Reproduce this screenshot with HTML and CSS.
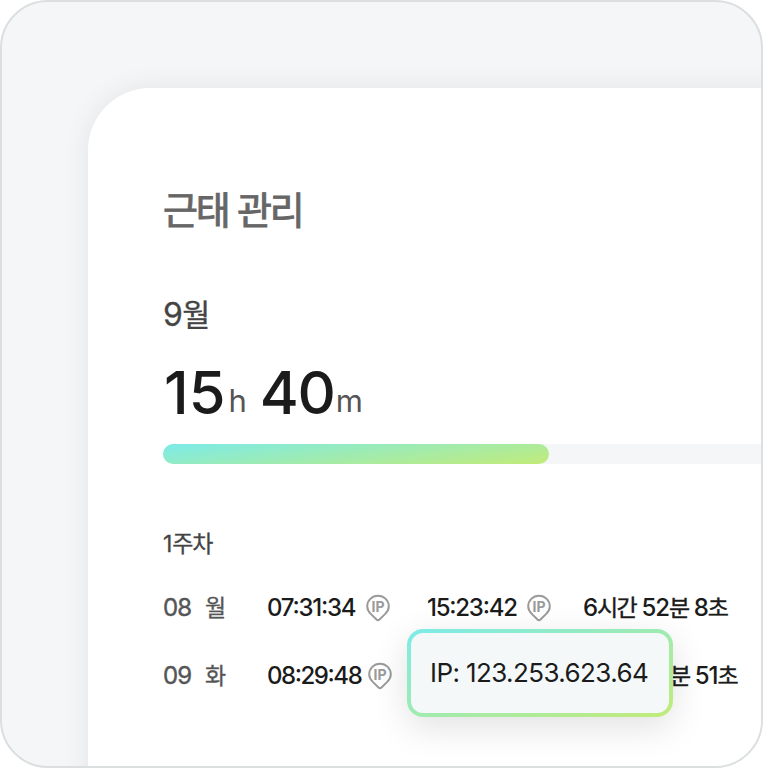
FILE: index.html
```html
<!DOCTYPE html>
<html lang="ko">
<head>
<meta charset="utf-8">
<title>근태 관리</title>
<link rel="stylesheet" href="styles.css">
</head>
<body>
<main class="frame">
  <section class="card">
    <h1 class="title">근태 관리</h1>
    <p class="month">9<span class="month-ko">월</span></p>
    <p class="total"><span class="num">15</span><span class="unit unit-h">h</span><span class="num num-m">40</span><span class="unit unit-m">m</span></p>
    <div class="track"><div class="bar"></div></div>
    <h2 class="week">1<span class="week-ko">주차</span></h2>
    <div class="row">
      <span class="date">08</span><span class="day">월</span>
      <span class="time"><b>07:31:34</b><svg class="pin" viewBox="0 0 26 28"><path d="M13 1.8C6.9 1.8 2.2 6.5 2.2 12.3c0 3.3 1.5 5.6 3.8 7.8l5.5 5.4c.9.8 2.1.8 3 0l5.5-5.4c2.3-2.2 3.8-4.5 3.8-7.8C23.8 6.5 19.1 1.8 13 1.8z"/><text x="13.2" y="17.6" text-anchor="middle">IP</text></svg></span>
      <span class="time"><b>15:23:42</b><svg class="pin" viewBox="0 0 26 28"><path d="M13 1.8C6.9 1.8 2.2 6.5 2.2 12.3c0 3.3 1.5 5.6 3.8 7.8l5.5 5.4c.9.8 2.1.8 3 0l5.5-5.4c2.3-2.2 3.8-4.5 3.8-7.8C23.8 6.5 19.1 1.8 13 1.8z"/><text x="13.2" y="17.6" text-anchor="middle">IP</text></svg></span>
      <span class="dur">6<i>시간</i> 52<i>분</i> 8<i>초</i></span>
    </div>
    <div class="row">
      <span class="date">09</span><span class="day">화</span>
      <span class="time"><b class="time-tight">08:29:48</b><svg class="pin pin-tight" viewBox="0 0 26 28"><path d="M13 1.8C6.9 1.8 2.2 6.5 2.2 12.3c0 3.3 1.5 5.6 3.8 7.8l5.5 5.4c.9.8 2.1.8 3 0l5.5-5.4c2.3-2.2 3.8-4.5 3.8-7.8C23.8 6.5 19.1 1.8 13 1.8z"/><text x="13.2" y="17.6" text-anchor="middle">IP</text></svg></span>
      <span class="time"></span>
      <span class="dur dur-end"><i>분</i> 51<i>초</i></span>
    </div>
  </section>
  <div class="tooltip">IP: 123.253.623.64</div>
</main>
</body>
</html>
```
FILE: styles.css
```css
* { box-sizing: border-box; }
body { margin: 0; background: #fff; font-family: Inter, "Noto Sans CJK KR", sans-serif; color: #1b1b1b; }
h1, h2, p { margin: 0; font-weight: 400; }
.frame {
  position: relative;
  width: 763px;
  height: 768px;
  padding: 86px 0 0 85.5px;
  border: 2px solid #dcdfdf;
  border-radius: 48px;
  background: #f4f6f8;
  overflow: hidden;
}
.card {
  width: 740px;
  height: 760px;
  padding: 94px 0 0 75.5px;
  border-radius: 62px 0 0 0;
  background: #fff;
  box-shadow: 0 0 28px rgba(0, 0, 0, .08);
}
.title { height: 56px; line-height: 56px; font-size: 38px; letter-spacing: -2.2px; color: #666; -webkit-text-stroke: .9px #666; }
.month { height: 40px; margin-top: 57px; line-height: 40px; font-size: 32px; color: #444; -webkit-text-stroke: .3px #444; }
.month-ko { margin-left: -.5px; font-size: 30.5px; }
.total { display: flex; align-items: baseline; height: 72px; margin-top: 21px; padding-left: 1px; line-height: 72px; }
.num { font-size: 59.5px; font-weight: 500; letter-spacing: 0; }
.num-m { margin-left: 13px; letter-spacing: -1.5px; }
.unit { position: relative; top: -2px; font-size: 31px; color: #555; }
.unit-h { margin-left: 3px; }
.unit-m { margin-left: 1.5px; }
.track { height: 20px; margin-top: 16px; background: #f4f6f8; border-radius: 10px 0 0 10px; }
.bar { width: 386px; height: 20px; border-radius: 10px; background: linear-gradient(173deg, #7cebe9, #c2eb79); }
.week { height: 32px; margin-top: 64px; line-height: 32px; font-size: 23px; color: #444; -webkit-text-stroke: .3px #444; }
.week-ko { letter-spacing: -1.2px; }
.row { display: grid; grid-template-columns: 42px 62px 160px 156px 1fr; align-items: center; height: 68px; font-size: 24px; line-height: 40px; }
.week + .row { margin-top: 14px; }
.date { color: #555; letter-spacing: -1px; -webkit-text-stroke: .4px #555; }
.day { color: #555; font-size: 23px; -webkit-text-stroke: .3px #555; }
.time { display: flex; align-items: center; }
.time b { font-weight: 500; letter-spacing: -1.25px; font-feature-settings: "case" 1; }
.time .time-tight { letter-spacing: -1.45px; }
.pin { flex: none; width: 26px; height: 28px; margin-left: 9.5px; }
.pin-tight { margin-left: 5.5px; }
.pin path { fill: none; stroke: #9b9b9b; stroke-width: 2; }
.pin text { font: 700 14px Inter, sans-serif; letter-spacing: .2px; fill: #9b9b9b; }
.dur { font-weight: 500; letter-spacing: -1.1px; white-space: nowrap; }
.dur i { font-style: normal; font-weight: 400; font-size: 23px; letter-spacing: -1.6px; -webkit-text-stroke: .4px #1b1b1b; }
.dur-end { padding-left: 87px; }
.tooltip {
  position: absolute;
  left: 405px;
  top: 627px;
  width: 266px;
  height: 88px;
  padding-left: 19px;
  border: 4px solid transparent;
  border-radius: 16px;
  background: linear-gradient(#f4f8f9, #f4f8f9) padding-box, linear-gradient(to bottom right, #7cebe9, #c2eb79) border-box;
  box-shadow: 0 10px 36px rgba(0, 0, 0, .12);
  font-size: 26px;
  line-height: 80px;
  letter-spacing: -.6px;
  white-space: nowrap;
}
```
